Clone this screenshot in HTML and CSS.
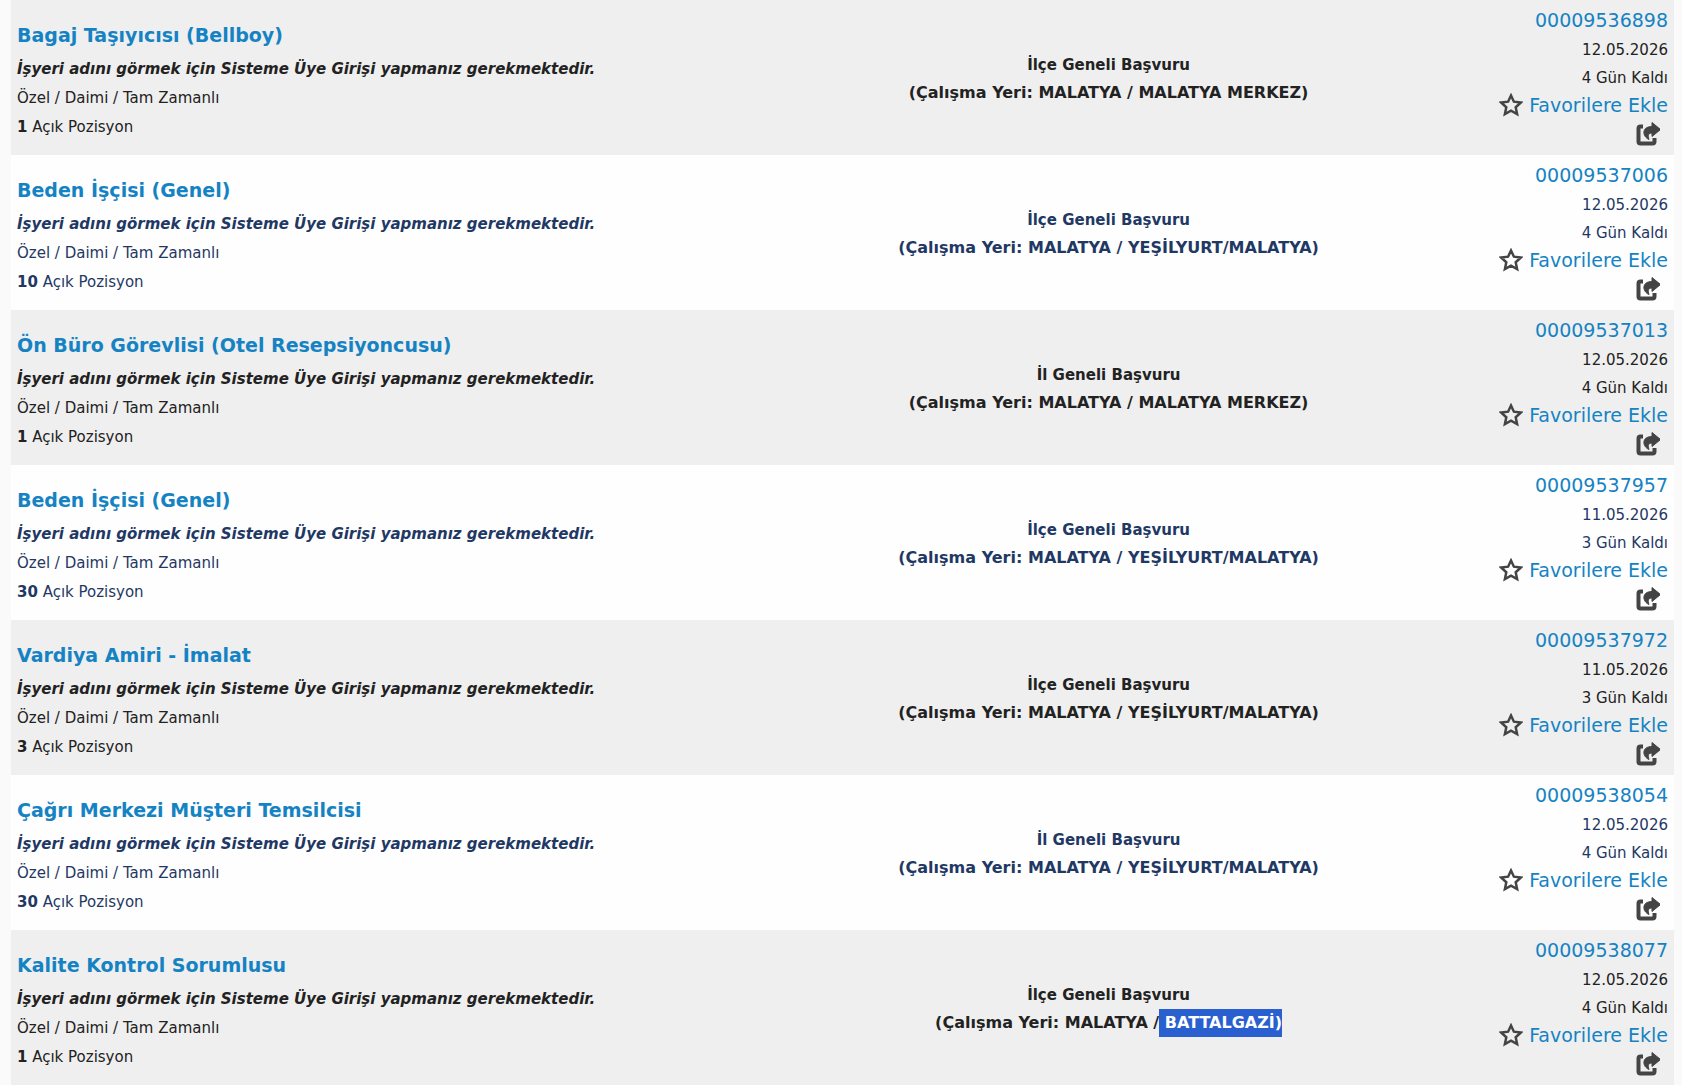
FILE: index.html
```html
<!DOCTYPE html>
<html lang="tr">
<head>
    <meta charset="UTF-8">
    <title>Açık İş İlanları</title>
    <link rel="stylesheet" href="styles.css">
</head>
<body>
<svg class="sprite" aria-hidden="true">
    <symbol id="star" viewBox="0 0 24 24">
        <path d="M12 2.500l2.900 6.200 7 .8-5.200 4.700 1.400 6.800L12 17.600l-6.100 3.400 1.400-6.800L2.100 9.500l7-.8z" fill="none" stroke="#444" stroke-width="2.500"/>
    </symbol>
    <symbol id="share" viewBox="0 0 24 24">
        <path d="M7 4.500H4.500Q2.500 4.500 2.500 6.500V19.500Q2.500 21.500 4.500 21.500H16.500Q18.500 21.500 18.500 19.500V16" fill="none" stroke="#444" stroke-width="4"/>
        <path d="M16 0.500l8.500 7-8.500 7v-3.500c-3.500 0-4.500 2-3 6.500-7-3-7.500-13 3-13z" fill="#444" stroke="#444" stroke-linejoin="round"/>
    </symbol>
</svg>
<div class="container">
    <table class="job-table">
        <tbody id="jobs"></tbody>
    </table>
</div>
<script>
    var jobs = [
        {title: "Bagaj Taşıyıcısı (Bellboy)", count: 1, scope: "İlçe", place: "MALATYA MERKEZ", no: "00009536898", date: "12.05.2026", days: 4},
        {title: "Beden İşçisi (Genel)", count: 10, scope: "İlçe", place: "YEŞİLYURT/MALATYA", no: "00009537006", date: "12.05.2026", days: 4},
        {title: "Ön Büro Görevlisi (Otel Resepsiyoncusu)", count: 1, scope: "İl", place: "MALATYA MERKEZ", no: "00009537013", date: "12.05.2026", days: 4},
        {title: "Beden İşçisi (Genel)", count: 30, scope: "İlçe", place: "YEŞİLYURT/MALATYA", no: "00009537957", date: "11.05.2026", days: 3},
        {title: "Vardiya Amiri - İmalat", count: 3, scope: "İlçe", place: "YEŞİLYURT/MALATYA", no: "00009537972", date: "11.05.2026", days: 3},
        {title: "Çağrı Merkezi Müşteri Temsilcisi", count: 30, scope: "İl", place: "YEŞİLYURT/MALATYA", no: "00009538054", date: "12.05.2026", days: 4},
        {title: "Kalite Kontrol Sorumlusu", count: 1, scope: "İlçe", place: "BATTALGAZİ", no: "00009538077", date: "12.05.2026", days: 4, selected: true}
    ];

    var html = "";
    for (var i = 0; i < jobs.length; i++) {
        var job = jobs[i];
        var place = " " + job.place + ")";
        if (job.selected) {
            place = '<span class="selected">' + place + '</span>';
        }
        html += '<tr>' +
            '<td class="job">' +
                '<a class="title" href="#">' + job.title + '</a>' +
                '<div class="company">İşyeri adını görmek için Sisteme Üye Girişi yapmanız gerekmektedir.</div>' +
                '<div>Özel / Daimi / Tam Zamanlı</div>' +
                '<div><b>' + job.count + '</b> Açık Pozisyon</div>' +
            '</td>' +
            '<td class="place">' +
                '<div>' + job.scope + ' Geneli Başvuru</div>' +
                '<div class="city">(Çalışma Yeri: MALATYA /' + place + '</div>' +
            '</td>' +
            '<td class="info">' +
                '<a class="link number" href="#">' + job.no + '</a>' +
                '<div>' + job.date + '</div>' +
                '<div>' + job.days + ' Gün Kaldı</div>' +
                '<a class="link favorite" href="#"><svg class="star"><use href="#star"/></svg>Favorilere Ekle</a>' +
                '<button class="share" type="button" aria-label="Paylaş"><svg class="share-icon"><use href="#share"/></svg></button>' +
            '</td>' +
        '</tr>';
    }
    document.getElementById("jobs").innerHTML = html;
</script>
</body>
</html>
```
FILE: styles.css
```css
body {
    margin: 0;
    background-color: #fafafa;
    font-family: Verdana, "DejaVu Sans", sans-serif;
    font-size: 15px;
    line-height: 28px;
    color: #222;
}
.sprite {
    display: none;
}
.container {
    padding: 0 8px 0 11px;
}
.job-table {
    width: 100%;
    table-layout: fixed;
    border-collapse: collapse;
}
tr {
    height: 155px;
    background-color: #efefef;
}
tr:nth-child(even) {
    background-color: #fefefe;
    color: #1f3864;
}
td {
    box-sizing: border-box;
    padding: 0 6px;
    vertical-align: middle;
}
a {
    color: #1583c3;
    text-decoration: none;
}
a:hover {
    text-decoration: underline;
}
.job {
    width: 50%;
    padding-top: 7px;
    line-height: 29px;
}
.title {
    display: block;
    margin-bottom: 5px;
    font-size: 19px;
    font-weight: bold;
}
.company {
    font-weight: bold;
    font-style: italic;
}
.place {
    width: 32%;
    padding-top: 2px;
    text-align: center;
    font-weight: bold;
}
.city {
    font-size: 16px;
}
.selected {
    display: inline-block;
    background-color: #2a5fd0;
    color: #fff;
    white-space: pre;
}
.info {
    text-align: right;
}
.link {
    display: block;
    font-size: 19px;
}
.number {
    margin-bottom: 2px;
}
.favorite {
    display: flex;
    justify-content: flex-end;
    align-items: center;
    gap: 6px;
    line-height: 26px;
}
.star {
    width: 24px;
    height: 24px;
}
.share {
    display: flex;
    align-items: center;
    height: 32px;
    margin-left: auto;
    padding: 0 8px;
    border: none;
    background: none;
    cursor: pointer;
}
.share-icon {
    width: 24px;
    height: 24px;
}
```
